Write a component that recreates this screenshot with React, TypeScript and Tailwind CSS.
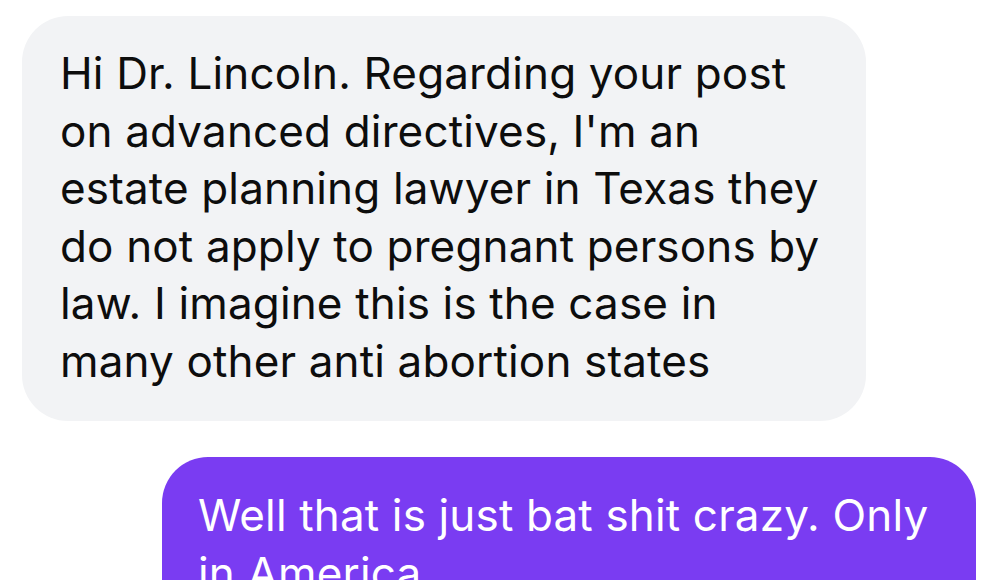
export default function App() {
  const incoming = [
    "Hi Dr. Lincoln. Regarding your post",
    "on advanced directives, I'm an",
    "estate planning lawyer in Texas they",
    "do not apply to pregnant persons by",
    "law. I imagine this is the case in",
    "many other anti abortion states",
  ];
  const outgoing = ["Well that is just bat shit crazy. Only", "in America"];

  return (
    <main
      className="w-[1000px] h-[580px] overflow-hidden bg-white pt-[16px]"
      style={{ fontFamily: "Inter, 'Noto Sans', sans-serif" }}
    >
      <div className="ml-[22px] w-[844px] rounded-[46px] bg-[#f2f3f5] pl-[38px] pt-[29px] pb-[31px] text-[44px] leading-[57.5px] tracking-[0.15px] text-[#0d0d0d]">
        {incoming.map((line) => (
          <div key={line} className="whitespace-nowrap">
            {line}
          </div>
        ))}
      </div>

      <div className="mt-[36px] ml-[162px] w-[814px] rounded-[46px] bg-[#7a3cf2] pl-[36px] pt-[30px] pb-[30px] text-[44px] leading-[57.5px] tracking-[0.15px] text-white">
        {outgoing.map((line) => (
          <div key={line} className="whitespace-nowrap">
            {line}
          </div>
        ))}
      </div>
    </main>
  );
}
